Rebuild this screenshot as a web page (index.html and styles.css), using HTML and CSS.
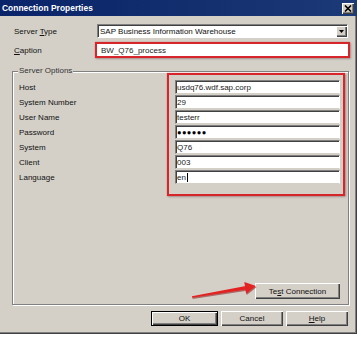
FILE: index.html
```html
<!DOCTYPE html>
<html>

<head>
  <meta charset="UTF-8">
  <title>Connection Properties</title>
  <link rel="stylesheet" href="styles.css">
</head>

<body>
  <div class="window">
    <div class="titlebar">
      <span class="title">Connection Properties</span>
      <span class="close">
        <svg width="8" height="7" viewBox="0 0 8 7">
          <path d="M1 0.5 L7 6.5 M7 0.5 L1 6.5" stroke="#000" stroke-width="1.6" />
        </svg>
      </span>
    </div>

    <div class="content">
      <div class="row">
        <label class="lbl">Server <u>T</u>ype</label>
        <div class="combo">
          <span class="combo-text">SAP Business Information Warehouse</span>
          <span class="combo-btn">
            <svg width="5" height="3" viewBox="0 0 5 3"><path d="M0 0 H5 L2.5 3 Z" fill="#000" /></svg>
          </span>
        </div>
      </div>

      <div class="row row-caption">
        <label class="lbl lbl-caption"><u>C</u>aption</label>
        <div class="mark mark-caption">
          <div class="field">BW_Q76_process</div>
        </div>
      </div>

      <fieldset class="group">
        <legend>Server Options</legend>
        <div class="group-body">
          <div class="params">
            <div class="labels">
              <div class="param-lbl">Host</div>
              <div class="param-lbl">System Number</div>
              <div class="param-lbl">User Name</div>
              <div class="param-lbl">Password</div>
              <div class="param-lbl">System</div>
              <div class="param-lbl">Client</div>
              <div class="param-lbl">Language</div>
            </div>
            <div class="mark mark-params">
              <div class="field">usdq76.wdf.sap.corp</div>
              <div class="field">29</div>
              <div class="field">testerr</div>
              <div class="field field-pwd">●●●●●●</div>
              <div class="field">Q76</div>
              <div class="field">003</div>
              <div class="field">en<span class="caret"></span></div>
            </div>
          </div>
          <div class="test-row">
            <button class="btn btn-test">Te<u>s</u>t Connection</button>
          </div>
        </div>
      </fieldset>

      <div class="actions">
        <button class="btn btn-default">OK</button>
        <button class="btn">Cancel</button>
        <button class="btn"><u>H</u>elp</button>
      </div>
    </div>

    <!-- annotation arrow pointing at Test Connection -->
    <svg class="arrow" width="75" height="26" viewBox="0 0 75 26">
      <g transform="translate(0.6 1.2)" fill="#8a1a1a" opacity="0.55">
        <polygon points="7.1,19.8 6.9,18.2 60.7,7.9 61.3,11.5" />
        <polygon points="71,8 59.3,3.9 61.1,15.8" />
      </g>
      <g fill="#e32222">
        <polygon points="7.1,19.8 6.9,18.2 60.7,7.9 61.3,11.5" />
        <polygon points="71,8 59.3,3.9 61.1,15.8" />
      </g>
    </svg>
  </div>
</body>

</html>
```

FILE: styles.css
```css
* {
  margin: 0;
  padding: 0;
  box-sizing: border-box;
}

body {
  background: #fff;
  font-family: "Liberation Sans", Arial, sans-serif;
  font-size: 8px;
  color: #111;
}

u {
  text-decoration: underline;
  text-underline-offset: 1px;
}

/* dialog frame */
.window {
  position: relative;
  width: 357px;
  height: 334px;
  background: #d4d0c8;
  box-shadow: inset -1px -1px 0 #404040, inset -2px -2px 0 #808080;
}

.titlebar {
  height: 16px;
  padding: 0 3px 0 2px;
  display: flex;
  align-items: center;
  justify-content: space-between;
  background: linear-gradient(to right, #0a246a, #14306e 60%, #1d3a78);
}

.title {
  color: #fff;
  font-weight: bold;
  font-size: 8.4px;
  letter-spacing: 0.05px;
}

.close {
  width: 12px;
  height: 11px;
  display: flex;
  align-items: center;
  justify-content: center;
  background: #d4d0c8;
  box-shadow: inset 1px 1px 0 #fff, inset -1px -1px 0 #404040, inset -2px -2px 0 #808080;
}

/* form */
.content {
  padding: 8px 8px 0 12px;
}

.row {
  display: flex;
  align-items: center;
}

.row-caption {
  margin-top: 4px;
}

.lbl {
  width: 85px;
  padding-left: 2px;
}

.lbl-caption {
  width: 83px;
}

.combo {
  flex: 1;
  height: 14px;
  margin-right: 1px;
  display: flex;
  align-items: center;
  justify-content: space-between;
  background: #fff;
  border: 1px solid #808080;
  border-right-color: #fff;
  border-bottom-color: #fff;
  box-shadow: inset 1px 1px 0 #404040;
  padding-left: 2px;
}

.combo-btn {
  width: 11px;
  height: 11px;
  display: flex;
  align-items: center;
  justify-content: center;
  background: #d4d0c8;
  box-shadow: inset 1px 1px 0 #fff, inset -1px -1px 0 #404040, inset -2px -2px 0 #808080;
}

/* red highlight boxes */
.mark {
  border: 2px solid #d6262b;
  box-shadow: 0 0 1px rgba(214, 38, 43, 0.6), 1px 1px 2px rgba(0, 0, 0, 0.25);
}

.mark-caption {
  flex: 1;
  height: 16px;
  margin-right: -1px;
}

.field {
  height: 14px;
  padding-left: 1px;
  display: flex;
  align-items: center;
  background: #fff;
  color: #222;
  border: 1px solid #808080;
  border-right-color: #fff;
  border-bottom-color: #d4d0c8;
  box-shadow: inset 1px 1px 0 #404040;
}

.mark-caption .field {
  height: 12px;
  padding-left: 3px;
  border: 1px solid #fff;
  box-shadow: none;
}

/* server options group */
.group {
  margin-top: 8px;
  border: 1px solid #808080;
  box-shadow: inset 1px 1px 0 #fff, 1px 1px 0 #fff;
}

.group legend {
  margin-left: 5px;
  padding: 0 1px;
  line-height: 10px;
  color: #333;
  background: #d4d0c8;
}

.group-body {
  height: 228px;
  display: flex;
  flex-direction: column;
}

.params {
  display: flex;
  margin-top: -3px;
  padding-left: 6px;
}

.labels {
  width: 148px;
  padding-top: 7px;
}

.param-lbl {
  height: 15px;
  line-height: 15px;
}

.mark-params {
  width: 178px;
  padding: 5px 3px 10px 6px;
  display: flex;
  flex-direction: column;
  gap: 1px;
}

.field-pwd {
  font-size: 7.5px;
  letter-spacing: 0.4px;
  color: #000;
}

.caret {
  width: 1px;
  height: 9px;
  margin-left: 1px;
  background: #000;
}

.test-row {
  margin-top: auto;
  padding: 0 8px 5px 0;
  display: flex;
  justify-content: flex-end;
}

/* buttons */
.btn {
  font-family: "Liberation Sans", Arial, sans-serif;
  font-size: 8px;
  color: #111;
  height: 15px;
  width: 62px;
  background: #d4d0c8;
  border: none;
  box-shadow: inset 1px 1px 0 #fff, inset -1px -1px 0 #404040, inset -2px -2px 0 #808080;
}

.btn-test {
  width: 85px;
  height: 16px;
}

.btn-default {
  width: 67px;
  border: 1px solid #000;
}

.actions {
  margin-top: 6px;
  padding-right: 1px;
  display: flex;
  justify-content: flex-end;
  gap: 3px;
}

.arrow {
  position: absolute;
  left: 185px;
  top: 278px;
}
```
